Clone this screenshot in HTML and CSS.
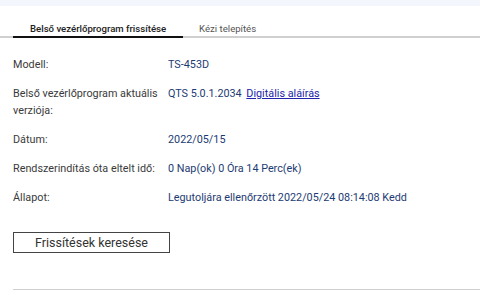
FILE: index.html
```html
<!DOCTYPE html>
<html lang="hu">
<head>
    <meta charset="UTF-8">
    <meta name="viewport" content="width=device-width, initial-scale=1.0">
    <title>Belső vezérlőprogram frissítése</title>
    <link rel="stylesheet" href="styles.css">
</head>
<body>
    <div class="top-band"></div>

    <div class="tabs">
        <div class="tab active">Belső vezérlőprogram frissítése</div>
        <div class="tab">Kézi telepítés</div>
    </div>

    <div class="fw-info">
        <div class="row">
            <div class="label">Modell:</div>
            <div class="value">TS-453D</div>
        </div>
        <div class="row">
            <div class="label">Belső vezérlőprogram aktuális verziója:</div>
            <div class="value">QTS 5.0.1.2034 <a href="#" class="sig-link">Digitális aláírás</a></div>
        </div>
        <div class="row">
            <div class="label">Dátum:</div>
            <div class="value">2022/05/15</div>
        </div>
        <div class="row">
            <div class="label">Rendszerindítás óta eltelt idő:</div>
            <div class="value">0 Nap(ok) 0 Óra 14 Perc(ek)</div>
        </div>
        <div class="row">
            <div class="label">Állapot:</div>
            <div class="value">Legutoljára ellenőrzött 2022/05/24 08:14:08 Kedd</div>
        </div>
    </div>

    <button type="button" class="check-btn">Frissítések keresése</button>

    <div class="bottom-line"></div>
</body>
</html>
```

FILE: styles.css
```css
body {
    font-family: Roboto, 'Noto Sans', sans-serif;
    font-size: 10.8px;
    color: #333;
    background-color: white;
    margin: 0;
    padding: 0;
    width: 480px;
    overflow: hidden;
}

.top-band {
    height: 6px;
    background-color: #f3f6fc;
}

/* Tabs */
.tabs {
    display: flex;
    margin-top: 16px;
    padding-left: 13px;
    border-bottom: 2px solid #d0d0d0;
    font-size: 9.6px;
}

.tab {
    padding: 0 16px 0;
    line-height: 14px;
    color: #555;
    margin-bottom: -2px;
    border-bottom: 2px solid transparent;
}

.tab.active {
    padding: 0 17px 0;
    font-weight: 500;
    color: #222;
    border-bottom-color: #111;
}

/* Firmware info rows */
.fw-info {
    padding: 18px 13px 0;
}

.row {
    display: flex;
    line-height: 17px;
    margin-bottom: 12px;
}

.label {
    width: 155px;
    flex-shrink: 0;
    color: #3a3a3a;
}

.value {
    color: #1d3b73;
}

.sig-link {
    color: #2222aa;
    margin-left: 2px;
}

.check-btn {
    display: block;
    margin: 26px 0 0 13px;
    width: 157px;
    height: 21px;
    padding: 0;
    background: white;
    border: 1px solid #444;
    border-radius: 0;
    font-family: Roboto, 'Noto Sans', sans-serif;
    font-size: 12.5px;
    color: #333;
}

.bottom-line {
    margin: 36px 0 0 13px;
    height: 1px;
    background-color: #cfcfcf;
}
```
